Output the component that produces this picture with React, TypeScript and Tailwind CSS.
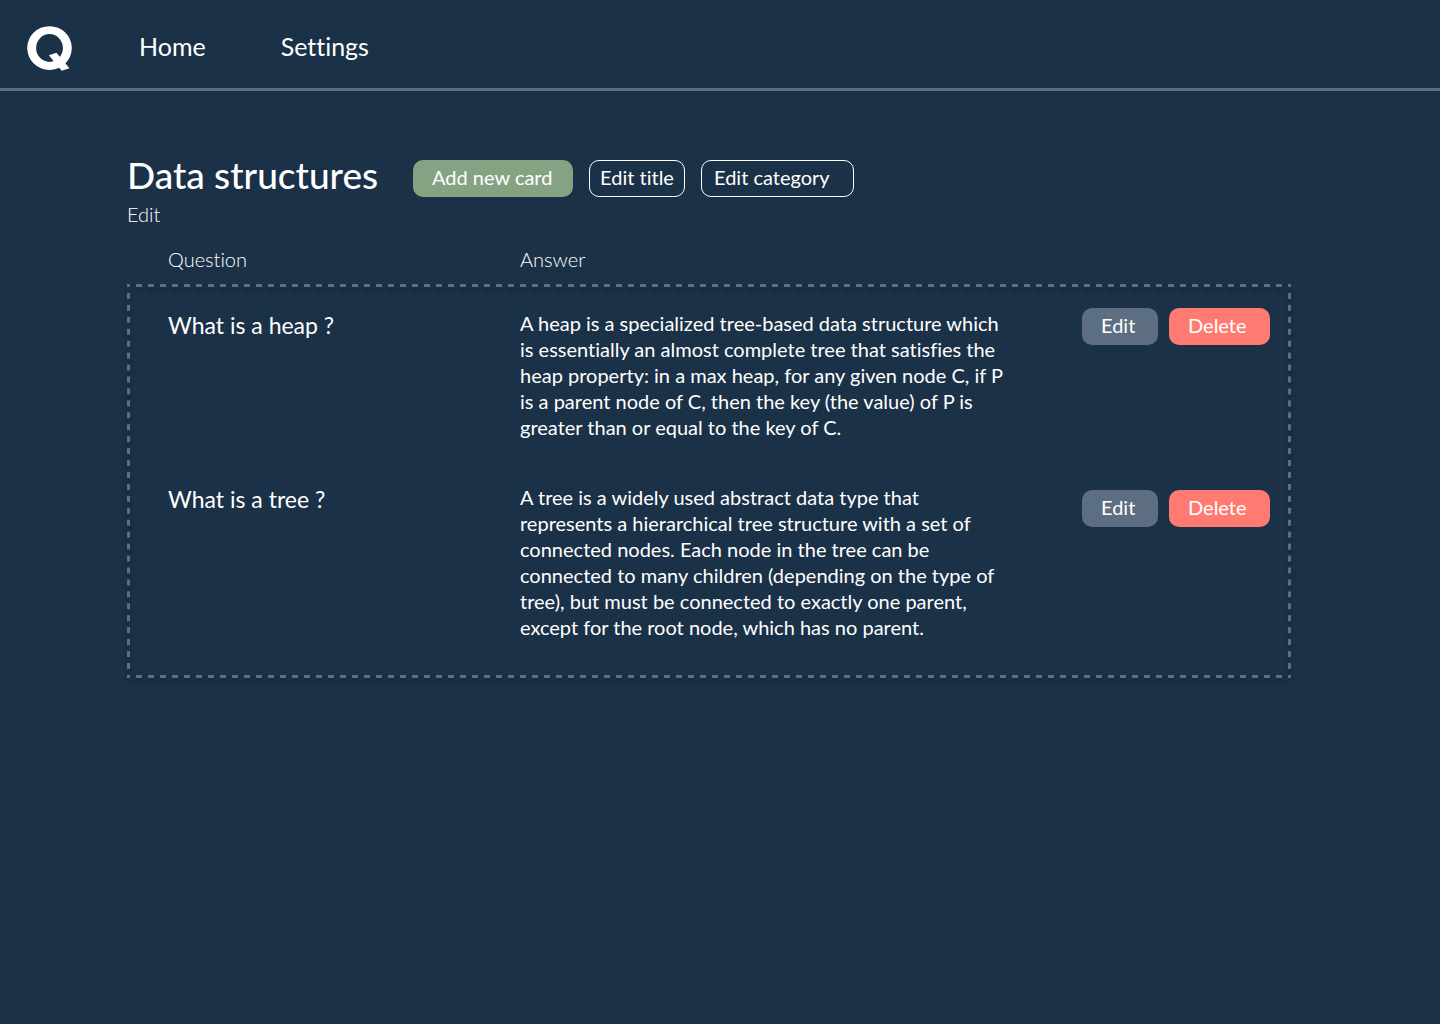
type Card = { question: string; answer: string };

const cards: Card[] = [
  {
    question: "What is a heap ?",
    answer:
      "A heap is a specialized tree-based data structure which is essentially an almost complete tree that satisfies the heap property: in a max heap, for any given node C, if P is a parent node of C, then the key (the value) of P is greater than or equal to the key of C.",
  },
  {
    question: "What is a tree ?",
    answer:
      "A tree is a widely used abstract data type that represents a hierarchical tree structure with a set of connected nodes. Each node in the tree can be connected to many children (depending on the type of tree), but must be connected to exactly one parent, except for the root node, which has no parent.",
  },
];

function Logo() {
  return (
    <svg viewBox="0 0 46 46" className="h-[46px] w-[46px]" role="img" aria-label="Q">
      <path
        fill="#fff"
        fillRule="evenodd"
        d="M22.5 1.2A22.3 21.9 0 0 1 22.5 45 22.3 21.9 0 0 1 22.5 1.2ZM22.5 9.1A13.4 13.9 0 0 0 22.5 36.9 13.4 13.9 0 0 0 22.5 9.1Z"
      />
      <path fill="#fff" d="M21.8 30.2 29.4 27.7 42.5 43.2 34.7 45.8Z" />
    </svg>
  );
}

function CardRow({ card }: { card: Card }) {
  return (
    <tr className="group align-top">
      <td className="pt-7 pl-[41px] text-[23px] leading-[26px]">{card.question}</td>
      <td className="pt-[26px] pb-[18px] leading-[26px] group-last:pb-[38px]">
        <p className="max-w-[494px]">{card.answer}</p>
      </td>
      <td className="pt-6 pr-[21px] group-last:pt-8">
        <div className="flex justify-end gap-[11px]">
          <button type="button" className="h-[37px] w-[76px] rounded-[10px] bg-[#5d6e82] pb-1 pl-[19px] text-left">
            Edit
          </button>
          <button type="button" className="h-[37px] w-[101px] rounded-[10px] bg-[#ff7b72] pb-1 pl-[19px] text-left">
            Delete
          </button>
        </div>
      </td>
    </tr>
  );
}

export default function App() {
  return (
    <div className="min-h-screen bg-[#1b3147] font-['Lato',sans-serif] text-[20px] text-white [font-variant-ligatures:none]">
      <header className="flex h-[91px] items-center border-b-[3px] border-[#5d6e82] pt-2 pl-[27px]">
        <a href="#">
          <Logo />
        </a>
        <nav className="ml-[66px] flex gap-[75px] pb-1 text-[25px] leading-8">
          <a href="#home">Home</a>
          <a href="#settings">Settings</a>
        </nav>
      </header>

      <main className="pt-[69px] pr-[149px] pl-[127px]">
        <div className="flex items-start">
          <h1 className="w-[286px] text-[37px] leading-[30px] font-medium">Data structures</h1>
          <div className="flex gap-4">
            <button type="button" className="h-[37px] w-[160px] rounded-[10px] bg-[#85a383] pb-1 pl-[19px] text-left">
              Add new card
            </button>
            <button type="button" className="h-[37px] w-[96px] rounded-[10px] border border-white pb-1">
              Edit title
            </button>
            <button type="button" className="h-[37px] w-[153px] rounded-[10px] border border-white pb-1 pl-3 text-left">
              Edit category
            </button>
          </div>
        </div>
        <p className="mt-1 leading-[26px] font-light">Edit</p>

        <table className="mt-[19px] w-full table-fixed border-collapse">
          <colgroup>
            <col className="w-[393px]" />
            <col />
            <col className="w-[250px]" />
          </colgroup>
          <thead>
            <tr className="text-left leading-[26px]">
              <th scope="col" className="pb-3 pl-[41px] font-light">
                Question
              </th>
              <th scope="col" className="pb-3 font-light">
                Answer
              </th>
              <td />
            </tr>
          </thead>
          <tbody className="relative before:pointer-events-none before:absolute before:inset-0 before:bg-[linear-gradient(90deg,#5d6e82_3px,transparent_3px_9px,#5d6e82_9px),linear-gradient(90deg,#5d6e82_3px,transparent_3px_9px,#5d6e82_9px),linear-gradient(#5d6e82_3px,transparent_3px_9px,#5d6e82_9px),linear-gradient(#5d6e82_3px,transparent_3px_9px,#5d6e82_9px)] before:bg-[length:12px_3px,12px_3px,3px_12px,3px_12px] before:bg-[position:left_top,left_bottom,left_top,right_top] before:[background-repeat:round_no-repeat,round_no-repeat,no-repeat_round,no-repeat_round] before:[filter:drop-shadow(0_4px_2px_rgba(0,0,0,0.25))]">
            {cards.map((card) => (
              <CardRow key={card.question} card={card} />
            ))}
          </tbody>
        </table>
      </main>
    </div>
  );
}
